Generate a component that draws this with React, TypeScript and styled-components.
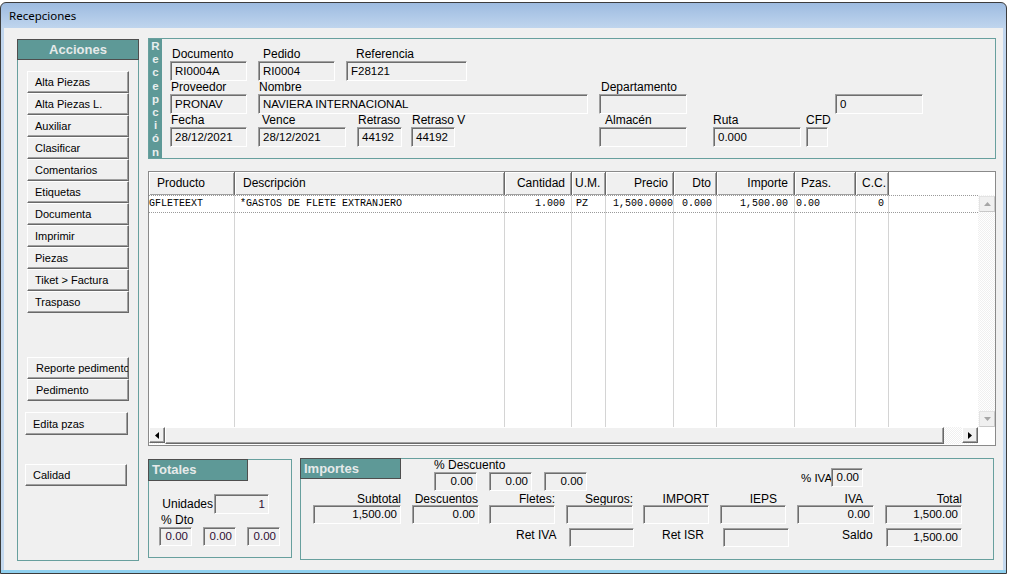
import React from 'react';
import styled, { createGlobalStyle } from 'styled-components';

const TEAL = '#5e9997';
const TEAL_LINE = '#68a09e';

const GlobalStyle = createGlobalStyle`
  html, body { margin: 0; padding: 0; background: #ffffff; }
  body {
    font-family: "Liberation Sans", Arial, sans-serif;
    font-size: 12px;
    color: #000;
  }
  * { box-sizing: border-box; }
`;

const Window = styled.div`
  margin-top: 2px;
  width: 1007px;
  height: 572px;
  border: 1px solid #3c3c3c;
  border-radius: 6px 6px 0 0;
  background: linear-gradient(#9dbbe0 0, #c1d6ee 26px, #c4d9ef 100%);
  box-shadow: inset 0 -3px #8fd0ef;
  padding: 0 3px 3px 3px;
  display: flex;
  flex-direction: column;
  overflow: hidden;
`;

const TitleBar = styled.div`
  height: 25px;
  padding-left: 5px;
  display: flex;
  align-items: center;
  font-family: "Noto Sans", "Liberation Sans", sans-serif;
  font-size: 11.5px;
  color: #000;
`;

const Content = styled.div`
  flex: 1;
  background: #f0f0f0;
  display: flex;
  padding: 10px 7px 0 13px;
`;

/* ---------- left actions panel ---------- */

const Sidebar = styled.div`
  width: 122px;
  height: 522px;
  margin-top: 1px;
  margin-right: 9px;
  display: flex;
  flex-direction: column;
  flex-shrink: 0;
`;

const PanelHeader = styled.div<{ $w?: number; $h: number; $center?: boolean }>`
  width: ${(p) => (p.$w ? `${p.$w}px` : 'auto')};
  height: ${(p) => p.$h}px;
  background: ${TEAL};
  border: 1px solid #4e4e4e;
  color: #e6eaea;
  font-weight: bold;
  font-size: 13px;
  line-height: ${(p) => p.$h - 2}px;
  text-align: ${(p) => (p.$center ? 'center' : 'left')};
  padding-left: ${(p) => (p.$center ? 0 : 3)}px;
  flex-shrink: 0;
`;

const SideBody = styled.div`
  flex: 1;
  border: 1px solid ${TEAL_LINE};
  border-top: none;
  padding: 11px 0 0 9px;
  display: flex;
  flex-direction: column;
  align-items: flex-start;
`;

const ActionButton = styled.button<{ $w?: number; $h?: number; $ml?: number; $mt?: number; $pl?: number }>`
  width: ${(p) => p.$w ?? 102}px;
  height: ${(p) => p.$h ?? 22}px;
  margin: ${(p) => p.$mt ?? 0}px 0 0 ${(p) => p.$ml ?? 0}px;
  padding: 0 0 0 ${(p) => p.$pl ?? 7}px;
  background: #f0f0f0;
  border: 1px solid;
  border-color: #ffffff #696969 #696969 #ffffff;
  box-shadow: inset -1px -1px #a0a0a0;
  font-family: "Liberation Sans", Arial, sans-serif;
  font-size: 11px;
  color: #000;
  text-align: left;
  white-space: nowrap;
  overflow: hidden;
  flex-shrink: 0;
`;

/* ---------- right side ---------- */

const RightColumn = styled.div`
  width: 848px;
  display: flex;
  flex-direction: column;
`;

const RecPanel = styled.div`
  height: 121px;
  border: 1px solid ${TEAL_LINE};
  display: flex;
`;

const VerticalTab = styled.div`
  width: 13px;
  background: ${TEAL};
  color: #e8eeee;
  font-weight: bold;
  font-size: 11.5px;
  line-height: 13.2px;
  padding-top: 1px;
  display: flex;
  flex-direction: column;
  align-items: center;
`;

const FieldsArea = styled.div`
  flex: 1;
  padding-top: 9px;
  display: flex;
  flex-direction: column;
`;

const FormRow = styled.div<{ $mt?: number; $ml?: number }>`
  display: flex;
  align-items: flex-start;
  margin-top: ${(p) => p.$mt ?? 0}px;
  margin-left: ${(p) => p.$ml ?? 0}px;
`;

const FieldGroup = styled.div<{ $ml: number; $w: number }>`
  margin-left: ${(p) => p.$ml}px;
  width: ${(p) => p.$w}px;
  flex-shrink: 0;
  display: flex;
  flex-direction: column;
`;

const Label = styled.div<{ $pl?: number; $pr?: number; $right?: boolean; $h?: number }>`
  height: ${(p) => p.$h ?? 13}px;
  line-height: ${(p) => p.$h ?? 13}px;
  padding: 0 ${(p) => p.$pr ?? 0}px 0 ${(p) => p.$pl ?? 0}px;
  text-align: ${(p) => (p.$right ? 'right' : 'left')};
  white-space: nowrap;
  color: #000;
`;

const TightLabel = styled.div<{ $pl?: number }>`
  height: 13px;
  line-height: 12px;
  padding-left: ${(p) => p.$pl ?? 0}px;
  white-space: nowrap;
`;

const Field = styled.div<{ $w?: number; $h?: number; $right?: boolean; $color?: string }>`
  width: ${(p) => (p.$w ? `${p.$w}px` : '100%')};
  height: ${(p) => p.$h ?? 20}px;
  line-height: ${(p) => (p.$h ?? 20) - 2}px;
  background: #f0f0f0;
  border: 1px solid;
  border-color: #a0a0a0 #ffffff #ffffff #a0a0a0;
  box-shadow: inset 1px 1px #6e6e6e;
  padding: 0 ${(p) => (p.$right ? 3 : 0)}px 0 ${(p) => (p.$right ? 0 : 4)}px;
  text-align: ${(p) => (p.$right ? 'right' : 'left')};
  font-size: 11.5px;
  color: ${(p) => p.$color ?? '#000'};
  white-space: nowrap;
  overflow: hidden;
  flex-shrink: 0;
`;

/* ---------- grid ---------- */

const GridBox = styled.div`
  margin-top: 12px;
  height: 275px;
  border: 1px solid #8a8a8a;
  background: #ffffff;
  display: flex;
  flex-direction: column;
`;

const GridHead = styled.div`
  height: 23px;
  display: flex;
  flex-shrink: 0;
`;

const HeadCell = styled.div<{ $w: number; $right?: boolean; $pad: number }>`
  width: ${(p) => p.$w}px;
  background: #f0f0f0;
  border-right: 1px solid #696969;
  box-shadow: inset 1px 1px #ffffff, inset -1px -1px #a0a0a0;
  line-height: 23px;
  text-align: ${(p) => (p.$right ? 'right' : 'left')};
  padding: 0 ${(p) => (p.$right ? p.$pad : 0)}px 0 ${(p) => (p.$right ? 0 : p.$pad)}px;
  white-space: nowrap;
  overflow: hidden;
  flex-shrink: 0;
`;

const HeadFiller = styled.div`
  flex: 1;
  background: #ffffff;
`;

const GridBody = styled.div`
  height: 232px;
  display: flex;
`;

const DataArea = styled.div`
  flex: 1;
  display: flex;
`;

const Column = styled.div<{ $w?: number }>`
  width: ${(p) => (p.$w ? `${p.$w}px` : 'auto')};
  flex: ${(p) => (p.$w ? '0 0 auto' : '1')};
  border-right: ${(p) => (p.$w ? '1px solid #d4d4d4' : 'none')};
`;

const DataCell = styled.div<{ $right?: boolean; $pad: number }>`
  height: 18px;
  border-top: 1px dotted #9a9a9a;
  border-bottom: 1px dotted #9a9a9a;
  font-family: "Liberation Mono", "Courier New", monospace;
  font-size: 10px;
  line-height: 16px;
  text-align: ${(p) => (p.$right ? 'right' : 'left')};
  padding: 0 ${(p) => (p.$right ? p.$pad : 0)}px 0 ${(p) => (p.$right ? 0 : p.$pad)}px;
  white-space: nowrap;
  overflow: hidden;
`;

const dither = `repeating-conic-gradient(#f0f0f0 0 25%, #ffffff 0 50%) 0 0 / 2px 2px`;

const VScroll = styled.div`
  width: 17px;
  background: ${dither};
  display: flex;
  flex-direction: column;
  justify-content: space-between;
  padding: 1px 1px 0 1px;
`;

const ScrollBtn = styled.div<{ $flat?: boolean }>`
  width: 16px;
  height: 16px;
  flex-shrink: 0;
  background: #f0f0f0;
  border: 1px solid;
  border-color: ${(p) => (p.$flat ? '#e3e3e3 #c8c8c8 #c8c8c8 #e3e3e3' : '#ffffff #696969 #696969 #ffffff')};
  box-shadow: ${(p) => (p.$flat ? 'none' : 'inset -1px -1px #a0a0a0')};
  display: flex;
  align-items: center;
  justify-content: center;
`;

const HScrollRow = styled.div`
  height: 17px;
  display: flex;
`;

const HScroll = styled.div`
  flex: 1;
  display: flex;
  background: ${dither};
`;

const Thumb = styled.div`
  flex: 1;
  background: #f0f0f0;
  border: 1px solid;
  border-color: #ffffff #696969 #696969 #ffffff;
  box-shadow: inset -1px -1px #a0a0a0;
`;

const Track = styled.div`
  width: 18px;
`;

const Corner = styled.div`
  width: 17px;
  background: #ffffff;
`;

/* ---------- bottom boxes ---------- */

const BottomRow = styled.div`
  margin-top: 12px;
  display: flex;
  align-items: flex-start;
`;

const GroupBox = styled.div<{ $w: number; $h: number; $mt?: number; $ml?: number }>`
  width: ${(p) => p.$w}px;
  height: ${(p) => p.$h}px;
  margin: ${(p) => p.$mt ?? 0}px 0 0 ${(p) => p.$ml ?? 0}px;
  border: 1px solid ${TEAL_LINE};
  display: flex;
  flex-direction: column;
  flex-shrink: 0;
`;

const GroupHeaderWrap = styled.div`
  margin: -1px 0 0 -1px;
`;

const FieldsLine = styled.div<{ $gap: number; $ml?: number }>`
  display: flex;
  gap: ${(p) => p.$gap}px;
  margin-left: ${(p) => p.$ml ?? 0}px;
`;

const InlinePair = styled.div<{ $ml: number; $mt: number }>`
  display: flex;
  align-items: center;
  margin: ${(p) => p.$mt}px 0 0 ${(p) => p.$ml}px;
`;

const InlineLabel = styled.div<{ $w: number; $pl?: number; $right?: boolean; $size?: number; $pt?: number }>`
  width: ${(p) => p.$w}px;
  padding: ${(p) => p.$pt ?? 0}px ${(p) => (p.$right ? 1 : 0)}px 0 ${(p) => p.$pl ?? 0}px;
  text-align: ${(p) => (p.$right ? 'right' : 'left')};
  font-size: ${(p) => p.$size ?? 12}px;
  line-height: 14px;
  white-space: nowrap;
  flex-shrink: 0;
`;

const UpArrow = () => (
  <svg width="7" height="4" viewBox="0 0 7 4">
    <polygon points="0,4 3.5,0 7,4" fill="#a6a6a6" />
  </svg>
);
const DownArrow = () => (
  <svg width="7" height="4" viewBox="0 0 7 4">
    <polygon points="0,0 7,0 3.5,4" fill="#a6a6a6" />
  </svg>
);
const LeftArrow = () => (
  <svg width="4" height="7" viewBox="0 0 4 7">
    <polygon points="4,0 0,3.5 4,7" fill="#000" />
  </svg>
);
const RightArrow = () => (
  <svg width="4" height="7" viewBox="0 0 4 7">
    <polygon points="0,0 4,3.5 0,7" fill="#000" />
  </svg>
);

const actions = [
  'Alta Piezas',
  'Alta Piezas L.',
  'Auxiliar',
  'Clasificar',
  'Comentarios',
  'Etiquetas',
  'Documenta',
  'Imprimir',
  'Piezas',
  'Tiket > Factura',
  'Traspaso',
];

const columns = [
  { title: 'Producto', w: 86, hr: false, hp: 8, value: 'GFLETEEXT', vr: false, vp: 0 },
  { title: 'Descripción', w: 270, hr: false, hp: 8, value: '*GASTOS DE FLETE EXTRANJERO', vr: false, vp: 5 },
  { title: 'Cantidad', w: 67, hr: true, hp: 6, value: '1.000', vr: true, vp: 6 },
  { title: 'U.M.', w: 34, hr: false, hp: 3, value: 'PZ', vr: false, vp: 4 },
  { title: 'Precio', w: 68, hr: true, hp: 5, value: '1,500.0000', vr: true, vp: 0 },
  { title: 'Dto', w: 43, hr: true, hp: 5, value: '0.000', vr: true, vp: 4 },
  { title: 'Importe', w: 78, hr: true, hp: 6, value: '1,500.00', vr: true, vp: 6 },
  { title: 'Pzas.', w: 61, hr: false, hp: 6, value: '0.00', vr: false, vp: 1 },
  { title: 'C.C.', w: 33, hr: true, hp: 2, value: '0', vr: true, vp: 4 },
];

const importes = [
  { label: 'Subtotal', ml: 12, w: 88, pr: 0, value: '1,500.00' },
  { label: 'Descuentos', ml: 11, w: 67, pr: 1, value: '0.00' },
  { label: 'Fletes:', ml: 10, w: 66, pr: 0, value: '' },
  { label: 'Seguros:', ml: 11, w: 67, pr: 0, value: '' },
  { label: 'IMPORT', ml: 10, w: 66, pr: 0, value: '' },
  { label: 'IEPS', ml: 11, w: 66, pr: 9, value: '' },
  { label: 'IVA', ml: 11, w: 77, pr: 11, value: '0.00' },
  { label: 'Total', ml: 11, w: 77, pr: 0, value: '1,500.00' },
];

const TOT_COLOR = '#2e0f33';

export default function App() {
  return (
    <>
      <GlobalStyle />
      <Window>
        <TitleBar>Recepciones</TitleBar>
        <Content>
          <Sidebar>
            <PanelHeader $h={21} $center>
              Acciones
            </PanelHeader>
            <SideBody>
              {actions.map((a) => (
                <ActionButton key={a}>{a}</ActionButton>
              ))}
              <ActionButton $mt={44} $pl={8}>
                Reporte pedimento
              </ActionButton>
              <ActionButton $pl={8}>Pedimento</ActionButton>
              <ActionButton $mt={11} $ml={-2} $w={103} $h={23}>
                Edita pzas
              </ActionButton>
              <ActionButton $mt={29} $ml={-2}>
                Calidad
              </ActionButton>
            </SideBody>
          </Sidebar>

          <RightColumn>
            <RecPanel>
              <VerticalTab>
                {'Recepción'.split('').map((ch, i) => (
                  <span key={i}>{ch}</span>
                ))}
              </VerticalTab>
              <FieldsArea>
                <FormRow>
                  <FieldGroup $ml={8} $w={77}>
                    <Label $pl={2}>Documento</Label>
                    <Field>RI0004A</Field>
                  </FieldGroup>
                  <FieldGroup $ml={11} $w={77}>
                    <Label $pl={5}>Pedido</Label>
                    <Field>RI0004</Field>
                  </FieldGroup>
                  <FieldGroup $ml={11} $w={121}>
                    <Label $pl={10}>Referencia</Label>
                    <Field>F28121</Field>
                  </FieldGroup>
                </FormRow>
                <FormRow>
                  <FieldGroup $ml={8} $w={77}>
                    <Label $pl={1}>Proveedor</Label>
                    <Field>PRONAV</Field>
                  </FieldGroup>
                  <FieldGroup $ml={11} $w={330}>
                    <Label $pl={1}>Nombre</Label>
                    <Field>NAVIERA INTERNACIONAL</Field>
                  </FieldGroup>
                  <FieldGroup $ml={11} $w={88}>
                    <Label $pl={2}>Departamento</Label>
                    <Field />
                  </FieldGroup>
                  <FieldGroup $ml={148} $w={88}>
                    <Label />
                    <Field>0</Field>
                  </FieldGroup>
                </FormRow>
                <FormRow>
                  <FieldGroup $ml={8} $w={77}>
                    <Label $pl={1}>Fecha</Label>
                    <Field>28/12/2021</Field>
                  </FieldGroup>
                  <FieldGroup $ml={11} $w={88}>
                    <Label $pl={4}>Vence</Label>
                    <Field>28/12/2021</Field>
                  </FieldGroup>
                  <FieldGroup $ml={11} $w={45}>
                    <Label $pl={1}>Retraso</Label>
                    <Field>44192</Field>
                  </FieldGroup>
                  <FieldGroup $ml={9} $w={44}>
                    <Label $pl={1}>Retraso V</Label>
                    <Field>44192</Field>
                  </FieldGroup>
                  <FieldGroup $ml={144} $w={88}>
                    <Label $pl={6}>Almacén</Label>
                    <Field />
                  </FieldGroup>
                  <FieldGroup $ml={26} $w={88}>
                    <Label>Ruta</Label>
                    <Field>0.000</Field>
                  </FieldGroup>
                  <FieldGroup $ml={5} $w={22}>
                    <Label>CFD</Label>
                    <Field />
                  </FieldGroup>
                </FormRow>
              </FieldsArea>
            </RecPanel>

            <GridBox>
              <GridHead>
                {columns.map((c) => (
                  <HeadCell key={c.title} $w={c.w} $right={c.hr} $pad={c.hp}>
                    {c.title}
                  </HeadCell>
                ))}
                <HeadFiller />
              </GridHead>
              <GridBody>
                <DataArea>
                  {columns.map((c) => (
                    <Column key={c.title} $w={c.w}>
                      <DataCell $right={c.vr} $pad={c.vp}>
                        {c.value}
                      </DataCell>
                    </Column>
                  ))}
                  <Column>
                    <DataCell $pad={0} />
                  </Column>
                </DataArea>
                <VScroll>
                  <ScrollBtn $flat>
                    <UpArrow />
                  </ScrollBtn>
                  <ScrollBtn $flat>
                    <DownArrow />
                  </ScrollBtn>
                </VScroll>
              </GridBody>
              <HScrollRow>
                <HScroll>
                  <ScrollBtn>
                    <LeftArrow />
                  </ScrollBtn>
                  <Thumb />
                  <Track />
                  <ScrollBtn>
                    <RightArrow />
                  </ScrollBtn>
                </HScroll>
                <Corner />
              </HScrollRow>
            </GridBox>

            <BottomRow>
              <GroupBox $w={144} $h={99} $mt={1}>
                <GroupHeaderWrap>
                  <PanelHeader $w={100} $h={22}>
                    Totales
                  </PanelHeader>
                </GroupHeaderWrap>
                <InlinePair $ml={0} $mt={13}>
                  <InlineLabel $w={65} $right>
                    Unidades
                  </InlineLabel>
                  <Field $w={55} $right $color={TOT_COLOR}>
                    1
                  </Field>
                </InlinePair>
                <TightLabel $pl={12}>% Dto</TightLabel>
                <FieldsLine $gap={11} $ml={10}>
                  <Field $w={33} $h={19} $right $color={TOT_COLOR}>
                    0.00
                  </Field>
                  <Field $w={33} $h={19} $right $color={TOT_COLOR}>
                    0.00
                  </Field>
                  <Field $w={33} $h={19} $right $color={TOT_COLOR}>
                    0.00
                  </Field>
                </FieldsLine>
              </GroupBox>

              <GroupBox $w={694} $h={102} $ml={8}>
                <FormRow>
                  <GroupHeaderWrap>
                    <PanelHeader $w={101} $h={21}>
                      Importes
                    </PanelHeader>
                  </GroupHeaderWrap>
                  <FieldGroup $ml={33} $w={153}>
                    <TightLabel>% Descuento</TightLabel>
                    <FieldsLine $gap={12}>
                      <Field $w={43} $h={19} $right>
                        0.00
                      </Field>
                      <Field $w={43} $h={19} $right>
                        0.00
                      </Field>
                      <Field $w={43} $h={19} $right>
                        0.00
                      </Field>
                    </FieldsLine>
                  </FieldGroup>
                  <InlinePair $ml={214} $mt={9}>
                    <InlineLabel $w={30} $size={11.5}>
                      % IVA
                    </InlineLabel>
                    <Field $w={32} $h={19} $right>
                      0.00
                    </Field>
                  </InlinePair>
                </FormRow>
                <FormRow $mt={2}>
                  {importes.map((f) => (
                    <FieldGroup key={f.label} $ml={f.ml} $w={f.w}>
                      <Label $right $pr={f.pr} $h={12}>
                        {f.label}
                      </Label>
                      <Field $h={19} $right>
                        {f.value}
                      </Field>
                    </FieldGroup>
                  ))}
                </FormRow>
                <FormRow $mt={4} $ml={215}>
                  <InlineLabel $w={53}>Ret IVA</InlineLabel>
                  <Field $w={65} $h={19} />
                  <InlineLabel $w={89} $pl={28}>
                    Ret ISR
                  </InlineLabel>
                  <Field $w={66} $h={19} />
                  <InlineLabel $w={97} $pl={53}>
                    Saldo
                  </InlineLabel>
                  <Field $w={76} $h={19} $right>
                    1,500.00
                  </Field>
                </FormRow>
              </GroupBox>
            </BottomRow>
          </RightColumn>
        </Content>
      </Window>
    </>
  );
}
